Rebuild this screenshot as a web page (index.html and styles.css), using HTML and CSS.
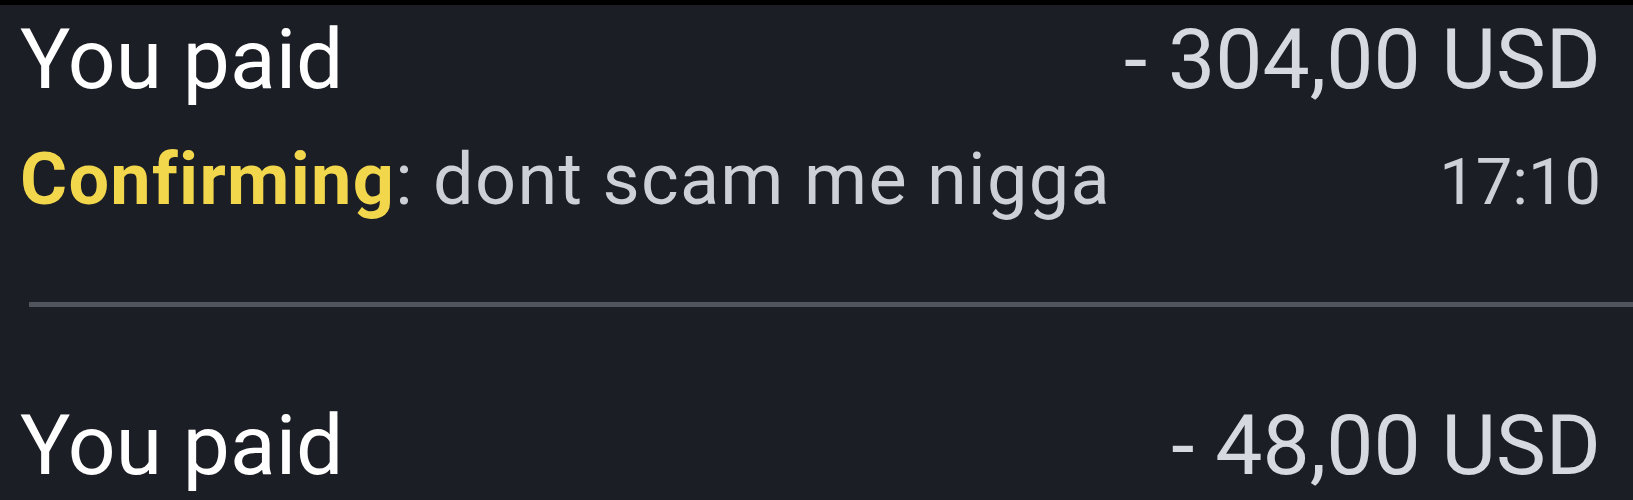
FILE: index.html
```html
<!DOCTYPE html>
<html lang="en">
<head>
<meta charset="UTF-8">
<title>Transactions</title>
<link rel="stylesheet" href="styles.css">
</head>
<body>
<div class="status-strip"></div>

<div class="tx-list">
    <div class="tx">
        <div class="tx-head">
            <span class="tx-title">You paid</span>
            <span class="tx-amount">- 304,00 USD</span>
        </div>
        <div class="tx-sub">
            <span class="tx-note"><span class="tx-state">Confirming</span>: dont scam me nigga</span>
            <span class="tx-time">17:10</span>
        </div>
    </div>

    <div class="divider"></div>

    <div class="tx">
        <div class="tx-head">
            <span class="tx-title">You paid</span>
            <span class="tx-amount">- 48,00 USD</span>
        </div>
    </div>
</div>
</body>
</html>
```

FILE: styles.css
```css
body, html {
    margin: 0;
    padding: 0;
    height: 100%;
    background-color: #1b1e25;
    font-family: Roboto, "Noto Sans", Arial, sans-serif;
    overflow: hidden;
}
.status-strip {
    height: 5px;
    background: #000;
}
.tx-list {
    padding-top: 13px;
}
.tx {
    padding: 0 32px 0 20px;
}
.tx-head, .tx-sub {
    display: flex;
    justify-content: space-between;
    align-items: baseline;
}
.tx-title {
    font-size: 84px;
    line-height: 1;
    color: #ffffff;
}
.tx-amount {
    font-size: 84px;
    line-height: 1;
    color: #d6d9df;
}
.tx-sub {
    margin-top: 42px;
}
.tx-note {
    font-size: 72px;
    line-height: 1;
    letter-spacing: 1.3px; /* the note runs a little wider than plain Roboto */
    color: #cdd0d7;
}
.tx-state {
    font-weight: bold;
    color: #f2d64c;
}
.tx-time {
    font-size: 65px;
    line-height: 1;
    color: #cdd0d7;
}
.divider {
    height: 5px;
    margin: 86px 0 97px 29px;
    background: #50545c;
}
```
